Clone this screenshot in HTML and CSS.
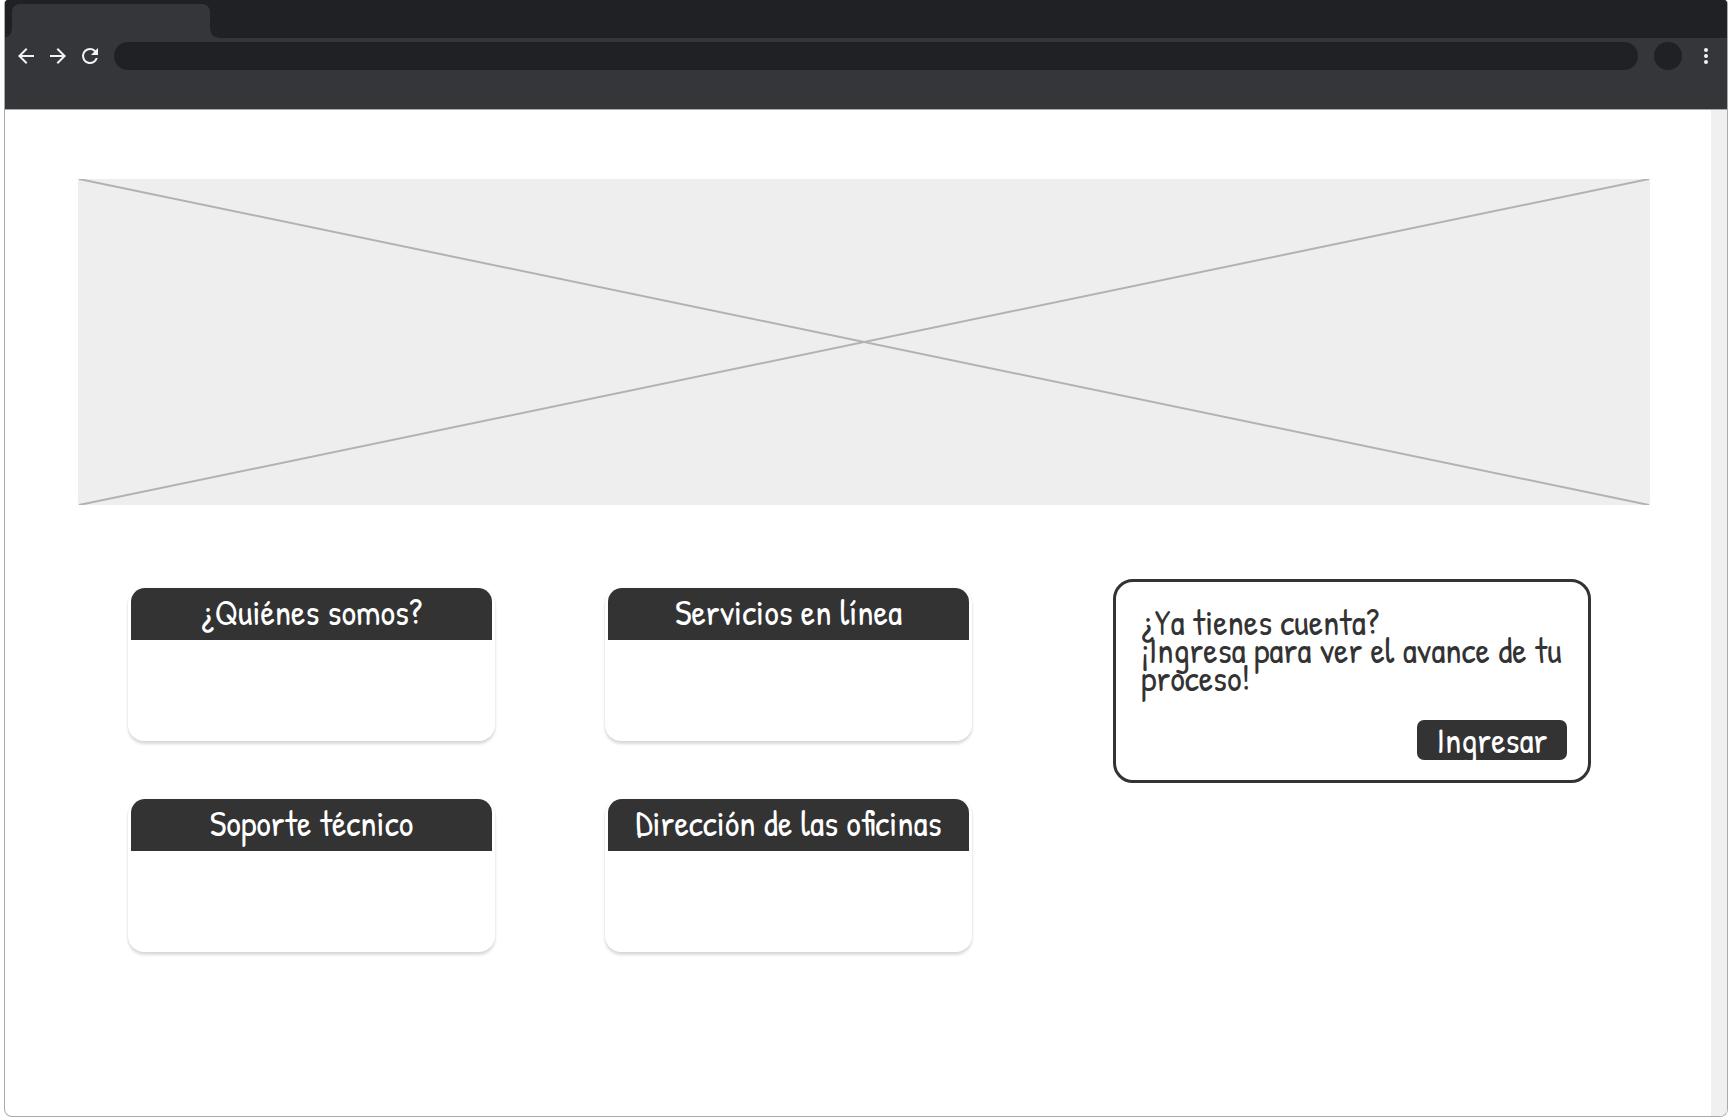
FILE: index.html
```html
<!DOCTYPE html>
<html lang="es">
<head>
<meta charset="utf-8">
<meta name="viewport" content="width=device-width, initial-scale=1">
<title>Inicio</title>
<link rel="stylesheet" href="styles.css">
</head>
<body>
<div class="window">
  <header class="chrome">
    <div class="tab-strip"><div class="tab"></div></div>
    <div class="toolbar">
      <button class="icon-button" type="button" aria-label="Atrás">
        <svg viewBox="0 0 24 24"><path d="M20 11H7.83l5.59-5.59L12 4l-8 8 8 8 1.41-1.41L7.83 13H20v-2z"/></svg>
      </button>
      <button class="icon-button" type="button" aria-label="Adelante">
        <svg viewBox="0 0 24 24"><path d="M12 4l-1.41 1.41L16.17 11H4v2h12.17l-5.58 5.59L12 20l8-8z"/></svg>
      </button>
      <button class="icon-button" type="button" aria-label="Recargar">
        <svg viewBox="0 0 24 24"><path d="M17.65 6.35A7.96 7.96 0 0 0 12 4a8 8 0 1 0 7.73 10h-2.08A6 6 0 1 1 12 6c1.66 0 3.14.69 4.22 1.78L13 11h7V4l-2.35 2.35z"/></svg>
      </button>
      <input class="address" type="text" aria-label="Dirección">
      <button class="avatar" type="button" aria-label="Perfil"></button>
      <button class="icon-button" type="button" aria-label="Menú">
        <svg viewBox="0 0 24 24"><circle cx="12" cy="6" r="2"/><circle cx="12" cy="12" r="2"/><circle cx="12" cy="18" r="2"/></svg>
      </button>
    </div>
  </header>
  <div class="viewport">
    <main class="page">
      <svg class="hero" viewBox="0 0 1572 326" preserveAspectRatio="none" role="img" aria-label="Imagen">
        <path d="M1 0L1571 326M1 326L1571 0"/>
      </svg>
      <div class="content">
        <section class="cards">
          <article class="card"><h2 class="card-title">¿Quiénes somos?</h2></article>
          <article class="card"><h2 class="card-title">Servicios en línea</h2></article>
          <article class="card"><h2 class="card-title">Soporte técnico</h2></article>
          <article class="card"><h2 class="card-title">Dirección de las oficinas</h2></article>
        </section>
        <aside class="login">
          <p class="login-text">¿Ya tienes cuenta?<br>¡Ingresa para ver el avance de tu proceso!</p>
          <button class="login-button" type="button">Ingresar</button>
        </aside>
      </div>
    </main>
    <div class="scroll-track"></div>
  </div>
</div>
</body>
</html>
```

FILE: styles.css
```css
* {
  box-sizing: border-box;
}

body {
  margin: 0;
  background: #fff;
  color: #333;
  font-family: "Patrick Hand", "Open Sans", sans-serif;
  font-size: 36px;
}

button,
input {
  margin: 0;
  padding: 0;
  border: 0;
  font: inherit;
}

.window {
  display: flex;
  flex-direction: column;
  min-height: 100vh;
  margin-left: 4px;
  border: 1px solid #aaa;
  border-top: 0;
  border-radius: 4px 4px 8px 8px;
  overflow: hidden;
}

.chrome {
  border-bottom: 1px solid #aaa;
  background: #35363a;
}

.tab-strip {
  height: 38px;
  padding: 4px 0 0 7px;
  background: #202124;
}

.tab {
  position: relative;
  width: 198px;
  height: 34px;
  border-radius: 8px 8px 0 0;
  background: #35363a;
}

/* Flared feet where the tab meets the toolbar */
.tab::before,
.tab::after {
  content: "";
  position: absolute;
  bottom: 0;
  width: 8px;
  height: 8px;
}

.tab::before {
  right: 100%;
  background: radial-gradient(circle at 0 0, #202124 7px, #35363a 8px);
}

.tab::after {
  left: 100%;
  background: radial-gradient(circle at 100% 0, #202124 7px, #35363a 8px);
}

.toolbar {
  display: flex;
  align-items: center;
  gap: 8px;
  padding: 4px 9px 39px;
}

.icon-button {
  display: flex;
  width: 24px;
  height: 24px;
  background: none;
}

.icon-button svg {
  width: 24px;
  height: 24px;
  fill: #f1f3f4;
}

.address {
  flex: 1;
  min-width: 0;
  height: 28px;
  margin: 0 8px 0 4px;
  padding: 0 14px;
  border-radius: 14px;
  background: #202124;
  color: #f1f3f4;
  font-size: 16px;
}

.avatar {
  width: 28px;
  height: 28px;
  margin-right: 4px;
  border-radius: 50%;
  background: #202124;
}

.viewport {
  display: flex;
  flex: 1;
}

.page {
  flex: 1;
  padding: 69px 61px 69px 73px;
}

.scroll-track {
  width: 16px;
  background: #f0f0f0;
}

.hero {
  display: block;
  width: 100%;
  height: 326px;
  background: #eee;
}

.hero path {
  fill: none;
  stroke: #b2b2b2;
  stroke-width: 2;
}

.content {
  display: grid;
  grid-template-columns: 844fr 478fr;
  column-gap: 141px;
  align-items: start;
  padding: 74px 59px 0 50px;
}

.cards {
  display: grid;
  grid-template-columns: 1fr 1fr;
  gap: 58px 110px;
  padding-top: 9px;
}

.card {
  min-height: 153px;
  padding: 0 3px;
  border-radius: 16px;
  box-shadow: 0 3px 3px rgba(0, 0, 0, 0.14), 0 0 2px rgba(0, 0, 0, 0.08);
}

.card-title {
  margin: 0;
  padding-bottom: 4px;
  border-radius: 14px 14px 0 0;
  background: #333;
  color: #fff;
  font-size: 36px;
  font-weight: 400;
  line-height: 48px;
  text-align: center;
}

.login {
  display: flex;
  flex-direction: column;
  gap: 28px;
  padding: 26px 21px 20px 25px;
  border: 3px solid #333;
  border-radius: 20px;
}

.login-text {
  margin: 0;
  line-height: 28px;
}

.login-button {
  align-self: flex-end;
  width: 150px;
  height: 40px;
  border-radius: 7px;
  background: #333;
  color: #fff;
  line-height: 40px;
}
```
